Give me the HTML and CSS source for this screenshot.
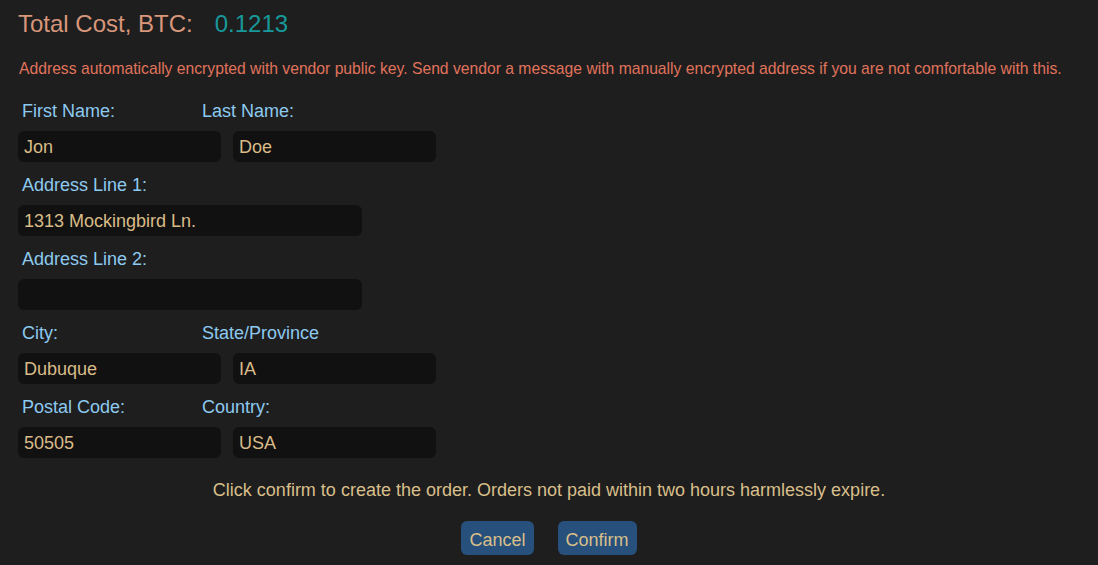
FILE: index.html
```html
<!DOCTYPE html>
<html>
<head>
<meta charset="utf-8">
<link rel="stylesheet" href="styles.css">
</head>
<body>
<div class="page">
  <h1 class="total"><span class="total-label">Total Cost, BTC:</span><span class="total-value">0.1213</span></h1>
  <p class="notice">Address automatically encrypted with vendor public key. Send vendor a message with manually encrypted address if you are not comfortable with this.</p>
  <form class="form">
    <div class="labels"><label class="label">First Name:</label><label class="label">Last Name:</label></div>
    <div class="inputs"><div class="input">Jon</div><div class="input">Doe</div></div>
    <div class="labels"><label class="label">Address Line 1:</label></div>
    <div class="inputs"><div class="input wide">1313 Mockingbird Ln.</div></div>
    <div class="labels"><label class="label">Address Line 2:</label></div>
    <div class="inputs"><div class="input wide"></div></div>
    <div class="labels"><label class="label">City:</label><label class="label">State/Province</label></div>
    <div class="inputs"><div class="input">Dubuque</div><div class="input">IA</div></div>
    <div class="labels"><label class="label">Postal Code:</label><label class="label">Country:</label></div>
    <div class="inputs"><div class="input">50505</div><div class="input">USA</div></div>
  </form>
  <p class="confirm-note">Click confirm to create the order. Orders not paid within two hours harmlessly expire.</p>
  <div class="actions">
    <button class="btn" type="button">Cancel</button>
    <button class="btn" type="button">Confirm</button>
  </div>
</div>
</body>
</html>
```

FILE: styles.css
```css
html, body {
  margin: 0;
  padding: 0;
  background: #1e1e1e;
  font-family: "Liberation Sans", Arial, sans-serif;
}
.page {
  padding: 9px 0 0 18px;
}
.total {
  margin: 0;
  font-weight: normal;
  font-size: 24px;
  line-height: 30px;
}
.total-label {
  color: #d8967a;
}
.total-value {
  color: #17999b;
  margin-left: 22px;
}
.notice {
  margin: 20px 0 0 1px;
  font-size: 15.7px;
  line-height: 20px;
  color: #e0735c;
  white-space: nowrap;
}
.form {
  display: flex;
  flex-direction: column;
  margin-top: 9px;
}
.labels {
  display: flex;
  padding: 13px 0 10px 4px;
}
.label {
  color: #8dcaf0;
  font-size: 18px;
  line-height: 20px;
  width: 180px;
}
.inputs {
  display: flex;
  gap: 12px;
}
.input {
  background: #111111;
  border-radius: 6px;
  width: 203px;
  height: 31px;
  line-height: 33px;
  padding-left: 6px;
  box-sizing: border-box;
  color: #d9bb88;
  font-size: 18px;
}
.input.wide {
  width: 344px;
}
.confirm-note {
  margin: 21px 0 0 -18px;
  text-align: center;
  font-size: 18px;
  line-height: 22px;
  color: #d9bf8a;
}
.actions {
  display: flex;
  justify-content: center;
  gap: 24px;
  margin: 20px 0 0 -18px;
}
.btn {
  font-family: "Liberation Sans", Arial, sans-serif;
  background: #27517c;
  border: none;
  border-radius: 6px;
  color: #d9bf8a;
  font-size: 18px;
  height: 34px;
  padding: 4px 8px 0;
}
```
